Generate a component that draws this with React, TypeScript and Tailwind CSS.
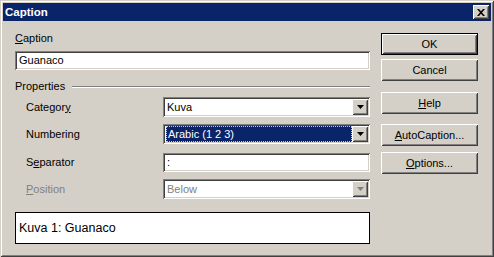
import type { ReactNode } from 'react';

// Win2000 classic 3D edges, painted with inset shadows
const raised =
  'shadow-[inset_1px_1px_0_#fff,inset_-1px_-1px_0_#404040,inset_2px_2px_0_#d4d0c8,inset_-2px_-2px_0_#808080]';
const sunken =
  'shadow-[inset_1px_1px_0_#808080,inset_-1px_-1px_0_#fff,inset_2px_2px_0_#404040,inset_-2px_-2px_0_#d4d0c8]';

function Arrow({ disabled = false }: { disabled?: boolean }) {
  return (
    <svg width="7" height="4" viewBox="0 0 7 4" className="block">
      <path d="M0 0h7L3.5 4z" fill={disabled ? '#808080' : '#000'} />
    </svg>
  );
}

function Combo({ value, selected = false, disabled = false }: { value: string; selected?: boolean; disabled?: boolean }) {
  return (
    <div className={`flex h-[20px] w-[207px] bg-white p-[2px] ${sunken}`}>
      <div className="flex min-w-0 flex-1 items-center pl-[1px]">
        {selected ? (
          <div className="flex h-[16px] w-full items-center border border-dotted border-[#c8c8c8] bg-[#0a246a] pl-[1px] text-white">
            {value}
          </div>
        ) : (
          <span className={disabled ? 'pl-[1px] text-[#808080]' : 'pl-[1px]'}>{value}</span>
        )}
      </div>
      <div className={`flex w-[16px] items-center justify-center bg-[#d4d0c8] ${raised}`}>
        <Arrow disabled={disabled} />
      </div>
    </div>
  );
}

function Field({ value, width }: { value: string; width: string }) {
  return (
    <div className={`flex h-[19px] items-center bg-white pl-[4px] ${width} ${sunken}`}>{value}</div>
  );
}

function Row({ label, children, disabled = false }: { label: ReactNode; children: ReactNode; disabled?: boolean }) {
  return (
    <div className="flex h-[20px] items-center">
      <div className={`w-[148px] pl-[11px] ${disabled ? 'text-[#808080]' : ''}`}>{label}</div>
      {children}
    </div>
  );
}

function Btn({ children, def = false, className = '' }: { children: ReactNode; def?: boolean; className?: string }) {
  if (def) {
    return (
      <div className={`h-[22px] w-[97px] border border-black ${className}`}>
        <div className={`flex h-full items-center justify-center bg-[#d4d0c8] ${raised}`}>{children}</div>
      </div>
    );
  }
  return (
    <div className={`flex h-[22px] w-[97px] items-center justify-center bg-[#d4d0c8] ${raised} ${className}`}>
      {children}
    </div>
  );
}

export default function App() {
  return (
    <div className="font-['Liberation_Sans',Arial,sans-serif] text-[11px] leading-[13px] text-black">
      <div
        className={`flex h-[257px] w-[494px] flex-col bg-[#d4d0c8] p-[3px] shadow-[inset_1px_1px_0_#d4d0c8,inset_-1px_-1px_0_#404040,inset_2px_2px_0_#fff,inset_-2px_-2px_0_#808080]`}
      >
        {/* title bar */}
        <div className="flex h-[18px] items-center justify-between bg-[#0a246a] pl-[2px] pr-[2px]">
          <span className="text-[11.5px] font-bold text-white">Caption</span>
          <div className={`flex h-[14px] w-[16px] items-center justify-center bg-[#d4d0c8] ${raised}`}>
            <svg width="8" height="7" viewBox="0 0 8 7" className="block">
              <path d="M0 0h2l2 2.3L6 0h2L5 3.5 8 7H6L4 4.7 2 7H0l3-3.5z" fill="#000" />
            </svg>
          </div>
        </div>

        <div className="flex flex-1">
          {/* left side */}
          <div className="ml-[12px] flex w-[355px] flex-col pt-[11px]">
            <div className="h-[13px]">
              <span className="underline">C</span>aption
            </div>
            <Field value="Guanaco" width="mt-[6px] w-[355px]" />

            <div className="mt-[10px] flex h-[13px] items-center">
              <span>Properties</span>
              <div className="ml-[7px] h-[2px] flex-1 border-t border-b border-t-[#808080] border-b-white" />
            </div>

            <div className="mt-[4px]">
              <Row label={<>Categor<span className="underline">y</span></>}>
                <Combo value="Kuva" />
              </Row>
            </div>
            <div className="mt-[7px]">
              <Row label="Numbering">
                <Combo value="Arabic (1 2 3)" selected />
              </Row>
            </div>
            <div className="mt-[8px]">
              <Row label={<>S<span className="underline">e</span>parator</>}>
                <Field value=":" width="w-[207px]" />
              </Row>
            </div>
            <div className="mt-[7px]">
              <Row label={<><span className="underline">P</span>osition</>} disabled>
                <Combo value="Below" disabled />
              </Row>
            </div>

            <div className="mt-[13px] flex h-[32px] w-[355px] items-center border border-black bg-white pl-[3px] text-[12.5px]">
              Kuva 1: Guanaco
            </div>
          </div>

          {/* buttons */}
          <div className="ml-[11px] flex flex-col pt-[12px]">
            <Btn def>OK</Btn>
            <Btn className="mt-[4px]">Cancel</Btn>
            <Btn className="mt-[11px]">
              <span className="underline">H</span>elp
            </Btn>
            <Btn className="mt-[10px]">
              <span className="underline">A</span>utoCaption...
            </Btn>
            <Btn className="mt-[6px]">
              <span className="underline">O</span>ptions...
            </Btn>
          </div>
        </div>
      </div>
    </div>
  );
}
